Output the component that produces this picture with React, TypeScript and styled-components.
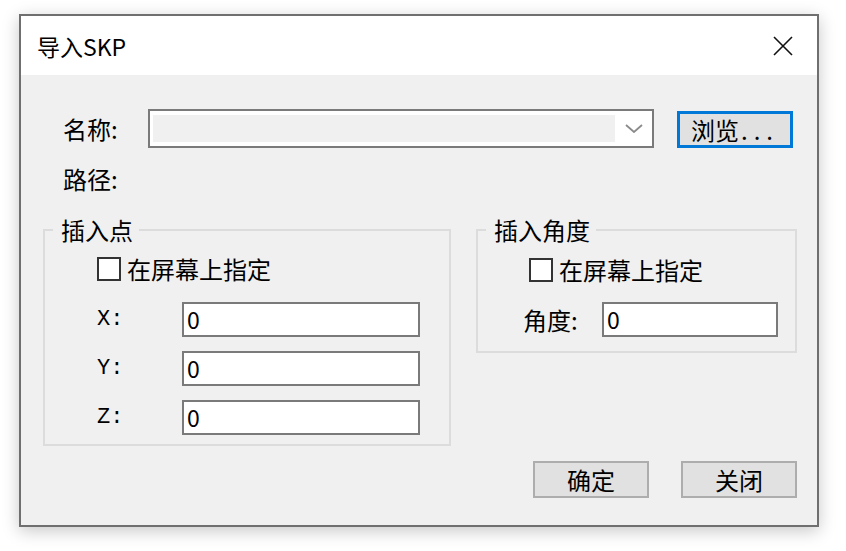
import React from "react";
import styled, { createGlobalStyle } from "styled-components";

const GlobalStyle = createGlobalStyle`
    html, body {
        margin: 0;
        background: #ffffff;
    }

    body {
        font-family: "Noto Sans CJK SC", "Noto Sans", sans-serif;
        color: #000000;
    }
`;

interface GroupProps {
    $width: number;
};

interface GroupContentProps {
    $padTop: number;
    $padLeft: number;
    $padBottom: number;
};

interface FieldRowProps {
    $gap: number;
    $labelWidth: number;
};

interface CheckRowProps {
    $indent?: number;
};

const Page = styled.div`
    padding: 14px 0 0 19px;
    height: 551px;
    box-sizing: border-box;
`;

const Window = styled.div`
    width: 800px;
    height: 513px;
    box-sizing: border-box;
    border: 2px solid #6f6f6f;
    background: #f0f0f0;
    display: flex;
    flex-direction: column;
    box-shadow: 0 4px 16px rgba(0, 0, 0, 0.22);
`;

const TitleBar = styled.header`
    height: 59px;
    flex: none;
    background: #ffffff;
    display: flex;
    align-items: center;
    justify-content: space-between;
    padding: 0 24px 0 16px;
`;

const Title = styled.h1`
    margin: 0;
    font-size: 23px;
    font-weight: 400;
    line-height: 28px;
`;

const CloseIcon = styled.svg`
    width: 20px;
    height: 20px;
    display: block;
`;

const Body = styled.main`
    padding: 34px 20px 0 22px;
    display: flex;
    flex-direction: column;
`;

const PathSection = styled.section`
    padding-left: 20px;
`;

const NameRow = styled.div`
    display: flex;
    align-items: flex-end;
    height: 39px;
`;

const Label = styled.span<{ $width?: number }>`
    width: ${({ $width }) => ($width ? `${$width}px` : "auto")};
    flex: none;
    align-self: center;
    font-size: 24px;
    line-height: 24px;
`;

const Combo = styled.div`
    width: 506px;
    height: 39px;
    box-sizing: border-box;
    border: 2px solid #7a7a7a;
    background: #ffffff;
    display: flex;
    align-items: stretch;
    padding: 4px 0 4px 3px;
`;

const ComboField = styled.div`
    width: 462px;
    background: #f0f0f0;
`;

const ComboArrow = styled.div`
    flex: 1;
    display: flex;
    align-items: center;
    justify-content: center;
`;

const BrowseButton = styled.button`
    width: 116px;
    height: 37px;
    margin-left: 23px;
    box-sizing: border-box;
    border: 3px solid #0078d7;
    background: #e1e1e1;
    font-family: inherit;
    font-size: 24px;
    line-height: 24px;
    color: #000000;
    padding: 0;
    display: flex;
    align-items: center;
    justify-content: center;
`;

const Dots = styled.span`
    letter-spacing: 6px;
    margin-left: 2px;
`;

const PathRow = styled.div`
    margin-top: 19px;
    height: 24px;
    display: flex;
`;

const GroupsRow = styled.div`
    margin-top: 25px;
    display: flex;
    gap: 25px;
    align-items: flex-start;
`;

const Group = styled.fieldset<GroupProps>`
    width: ${({ $width }) => $width}px;
    box-sizing: border-box;
    margin: 0;
    min-width: 0;
    border: 2px solid #dcdcdc;
    padding: 0;
`;

const Legend = styled.legend`
    margin-left: 8px;
    padding: 0 6px 0 8px;
    font-size: 24px;
    line-height: 28px;
`;

const GroupContent = styled.div<GroupContentProps>`
    padding: ${({ $padTop, $padLeft, $padBottom }) => `${$padTop}px 0 ${$padBottom}px ${$padLeft}px`};
`;

const CheckRow = styled.label<CheckRowProps>`
    display: flex;
    align-items: center;
    gap: 6px;
    height: 24px;
    margin-left: ${({ $indent }) => $indent ?? 0}px;
    font-size: 24px;
    line-height: 24px;
`;

const CheckBox = styled.span`
    width: 24px;
    height: 24px;
    box-sizing: border-box;
    border: 2px solid #333333;
    background: #ffffff;
    flex: none;
`;

const FieldRow = styled.div<FieldRowProps>`
    display: grid;
    grid-template-columns: ${({ $labelWidth }) => $labelWidth}px auto;
    align-items: center;
    margin-top: ${({ $gap }) => $gap}px;
`;

const AxisLabel = styled.span`
    font-family: "Liberation Mono", monospace;
    font-size: 22px;
    line-height: 24px;
`;

const NumberInput = styled.input<{ $width: number }>`
    width: ${({ $width }) => $width}px;
    height: 35px;
    box-sizing: border-box;
    border: 2px solid #7a7a7a;
    background: #ffffff;
    padding: 0 0 2px 3px;
    margin: 0;
    font-family: "Noto Sans CJK SC", sans-serif;
    font-size: 23px;
    color: #000000;
    outline: none;
`;

const Footer = styled.footer`
    margin-top: 15px;
    display: flex;
    justify-content: flex-end;
    gap: 32px;
`;

const DialogButton = styled.button`
    width: 116px;
    height: 37px;
    box-sizing: border-box;
    border: 2px solid #adadad;
    background: #e1e1e1;
    padding: 0;
    font-family: inherit;
    font-size: 24px;
    line-height: 24px;
    color: #000000;
`;

const axes = ["X", "Y", "Z"];

export default function App() {
    return (
        <Page>
            <GlobalStyle />
            <Window>
                <TitleBar>
                    <Title>导入SKP</Title>
                    <CloseIcon viewBox="0 0 20 20">
                        <path d="M1 1 L19 19 M19 1 L1 19" stroke="#111" strokeWidth="1.6" fill="none" />
                    </CloseIcon>
                </TitleBar>
                <Body>
                    <PathSection>
                        <NameRow>
                            <Label $width={85}>名称:</Label>
                            <Combo>
                                <ComboField />
                                <ComboArrow>
                                    <svg width="18" height="9" viewBox="0 0 18 9">
                                        <path d="M1 1 L9 8 L17 1" stroke="#8a8a8a" strokeWidth="1.8" fill="none" />
                                    </svg>
                                </ComboArrow>
                            </Combo>
                            <BrowseButton>浏览<Dots>...</Dots></BrowseButton>
                        </NameRow>
                        <PathRow>
                            <Label>路径:</Label>
                        </PathRow>
                    </PathSection>

                    <GroupsRow>
                        <Group $width={408}>
                            <Legend>插入点</Legend>
                            <GroupContent $padTop={13} $padLeft={52} $padBottom={9}>
                                <CheckRow>
                                    <CheckBox />
                                    在屏幕上指定
                                </CheckRow>
                                {axes.map((axis, i) => (
                                    <FieldRow key={axis} $gap={i === 0 ? 21 : 14} $labelWidth={85}>
                                        <AxisLabel>{axis}:</AxisLabel>
                                        <NumberInput $width={238} defaultValue="0" readOnly />
                                    </FieldRow>
                                ))}
                            </GroupContent>
                        </Group>

                        <Group $width={321}>
                            <Legend>插入角度</Legend>
                            <GroupContent $padTop={14} $padLeft={45} $padBottom={14}>
                                <CheckRow $indent={6}>
                                    <CheckBox />
                                    在屏幕上指定
                                </CheckRow>
                                <FieldRow $gap={20} $labelWidth={79}>
                                    <Label>角度:</Label>
                                    <NumberInput $width={176} defaultValue="0" readOnly />
                                </FieldRow>
                            </GroupContent>
                        </Group>
                    </GroupsRow>

                    <Footer>
                        <DialogButton>确定</DialogButton>
                        <DialogButton>关闭</DialogButton>
                    </Footer>
                </Body>
            </Window>
        </Page>
    );
}
